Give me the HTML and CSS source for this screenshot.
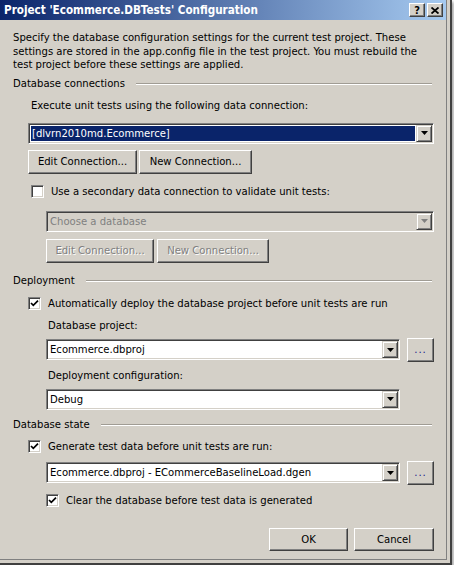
FILE: index.html
```html
<!DOCTYPE html>
<html>
<head>
    <link rel="stylesheet" href="styles.css">
</head>
<body>
    <div class="window">
        <div class="title_bar">
            <span class="title_text">Project 'Ecommerce.DBTests' Configuration</span>
            <div class="cap_btns">
                <span class="cap_btn">?</span>
                <span class="cap_btn"><svg width="8" height="7" viewBox="0 0 8 7"><path d="M0.5 0.5 L7.5 6.5 M7.5 0.5 L0.5 6.5" stroke="#000" stroke-width="1.8"/></svg></span>
            </div>
        </div>

        <div class="content">
            <p class="intro">Specify the database configuration settings for the current test project. These<br>settings are stored in the app.config file in the test project. You must rebuild the<br>test project before these settings are applied.</p>

            <div class="group_title"><span>Database connections</span><div class="etched"></div></div>
            <div class="label conn_label">Execute unit tests using the following data connection:</div>
            <div class="combo main_combo">
                <span class="combo_text selected">[dlvrn2010md.Ecommerce]</span>
                <span class="combo_arrow"><svg width="7" height="4" viewBox="0 0 7 4"><polygon points="0,0 7,0 3.5,4" fill="#000"/></svg></span>
            </div>
            <div class="btn_row first_btns">
                <button class="btn" style="width:109px">Edit Connection...</button>
                <button class="btn" style="width:113px">New Connection...</button>
            </div>
            <div class="check_row secondary_check">
                <span class="checkbox"></span>
                <span>Use a secondary data connection to validate unit tests:</span>
            </div>
            <div class="combo disabled sub_combo">
                <span class="combo_text">Choose a database</span>
                <span class="combo_arrow"><svg width="7" height="4" viewBox="0 0 7 4"><polygon points="0,0 7,0 3.5,4" fill="#808080"/></svg></span>
            </div>
            <div class="btn_row second_btns">
                <button class="btn" disabled style="width:108px">Edit Connection...</button>
                <button class="btn" disabled style="width:112px">New Connection...</button>
            </div>

            <div class="group_title deploy_title"><span>Deployment</span><div class="etched"></div></div>
            <div class="check_row deploy_check">
                <span class="checkbox"><svg width="9" height="9" viewBox="0 0 9 9"><path d="M1 4 L3.3 6.4 L8 1.6" fill="none" stroke="#000" stroke-width="1.7"/></svg></span>
                <span>Automatically deploy the database project before unit tests are run</span>
            </div>
            <div class="label sub_label proj_label">Database project:</div>
            <div class="combo_row proj_row">
                <div class="combo short_combo">
                    <span class="combo_text">Ecommerce.dbproj</span>
                    <span class="combo_arrow"><svg width="7" height="4" viewBox="0 0 7 4"><polygon points="0,0 7,0 3.5,4" fill="#000"/></svg></span>
                </div>
                <button class="btn browse_btn">...</button>
            </div>
            <div class="label sub_label config_label">Deployment configuration:</div>
            <div class="combo short_combo config_combo">
                <span class="combo_text">Debug</span>
                <span class="combo_arrow"><svg width="7" height="4" viewBox="0 0 7 4"><polygon points="0,0 7,0 3.5,4" fill="#000"/></svg></span>
            </div>

            <div class="group_title state_title"><span>Database state</span><div class="etched"></div></div>
            <div class="check_row state_check">
                <span class="checkbox"><svg width="9" height="9" viewBox="0 0 9 9"><path d="M1 4 L3.3 6.4 L8 1.6" fill="none" stroke="#000" stroke-width="1.7"/></svg></span>
                <span>Generate test data before unit tests are run:</span>
            </div>
            <div class="combo_row gen_row">
                <div class="combo short_combo">
                    <span class="combo_text">Ecommerce.dbproj - ECommerceBaselineLoad.dgen</span>
                    <span class="combo_arrow"><svg width="7" height="4" viewBox="0 0 7 4"><polygon points="0,0 7,0 3.5,4" fill="#000"/></svg></span>
                </div>
                <button class="btn browse_btn">...</button>
            </div>
            <div class="check_row clear_check">
                <span class="checkbox"><svg width="9" height="9" viewBox="0 0 9 9"><path d="M1 4 L3.3 6.4 L8 1.6" fill="none" stroke="#000" stroke-width="1.7"/></svg></span>
                <span>Clear the database before test data is generated</span>
            </div>

            <div class="dialog_btns">
                <button class="btn" style="width:79px">OK</button>
                <button class="btn" style="width:80px">Cancel</button>
            </div>
        </div>
    </div>
</body>
</html>
```

FILE: styles.css
```css
* { box-sizing: border-box; }
body { margin: 0; background: #fff; font-family: "DejaVu Sans Condensed", "DejaVu Sans", sans-serif; font-size: 11.2px; color: #000; }

/* window frame */
.window { width: 452px; height: 565px; background: #d4d0c8; border-right: 2px solid #404040; border-bottom: 2px solid #404040;
    box-shadow: inset -3px -3px 0 #d4d0c8, inset -4px -4px 0 #808080, 2px 2px 3px rgba(0,0,0,0.35); display: flex; flex-direction: column; }
.title_bar { height: 20px; margin-right: 4px; background: linear-gradient(to right, #0a246a, #a6caf0); display: flex; align-items: center; justify-content: space-between; padding: 0 3px 0 4px; }
.title_text { color: #fff; font-weight: bold; font-size: 11.6px; }
.cap_btns { display: flex; gap: 2px; }
.cap_btn { width: 16px; height: 14px; background: #d4d0c8; border: 1px solid; border-color: #fff #404040 #404040 #fff; box-shadow: inset -1px -1px 0 #808080;
    display: flex; align-items: center; justify-content: center; font-weight: bold; font-size: 11px; line-height: 1; }

.content { padding: 11px 16px 0 13px; display: flex; flex-direction: column; }
.intro { margin: 0; line-height: 13.5px; }
.label { line-height: 14px; }

/* group headings */
.group_title { display: flex; align-items: center; line-height: 14px; margin-top: 5px; }
.group_title .etched { flex: 1; height: 2px; margin-left: 11px; margin-right: 2px; border-top: 1px solid #a09c94; border-bottom: 1px solid #fff; }
.deploy_title { margin-top: 11px; }
.state_title { margin-top: 8px; }

/* buttons */
.btn { font: inherit; height: 24px; padding: 0; background: #d4d0c8; color: #000; border: 1px solid; border-color: #fff #404040 #404040 #fff;
    box-shadow: inset -1px -1px 0 #808080; }
.btn:disabled { color: #808080; text-shadow: 1px 1px 0 #fff; }
.btn_row { display: flex; gap: 2px; }
.first_btns { margin-left: 15px; margin-top: 6px; }
.second_btns { margin-left: 33px; margin-top: 7px; gap: 3px; }
.browse_btn { width: 27px; height: 24px; color: #1a1a8a; letter-spacing: 1px; }
.dialog_btns { display: flex; justify-content: flex-end; gap: 6px; margin-top: 20px; }
.dialog_btns .btn { height: 23px; }

/* combo boxes */
.combo { height: 21px; display: flex; align-items: stretch; background: #fff; border: 1px solid; border-color: #808080 #fff #fff #808080;
    box-shadow: inset 1px 1px 0 #404040, inset -1px -1px 0 #d4d0c8; padding: 2px; }
.combo_text { flex: 1; padding-left: 1px; line-height: 15px; white-space: nowrap; overflow: hidden; }
.combo_text.selected { background: #0a246a; color: #fff; margin-right: 1px; }
.combo_arrow { width: 16px; background: #d4d0c8; border: 1px solid; border-color: #d4d0c8 #404040 #404040 #d4d0c8;
    box-shadow: inset 1px 1px 0 #fff, inset -1px -1px 0 #808080; display: flex; align-items: center; justify-content: center; margin: -1px -1px -1px 0; }
.combo.disabled { background: #d4d0c8; color: #808080; }
.main_combo { margin-left: 15px; margin-top: 10px; }
.sub_combo { margin-left: 33px; margin-top: 12px; }
.short_combo { width: 354px; }
.combo_row { display: flex; align-items: center; gap: 7px; margin-left: 33px; }
.proj_row { margin-top: 5px; }
.gen_row { margin-top: 7px; }
.config_combo { margin-left: 33px; margin-top: 6px; }

/* labels */
.conn_label { margin-left: 18px; margin-top: 8px; }
.sub_label { margin-left: 35px; }
.proj_label { margin-top: 8px; }
.config_label { margin-top: 7px; }

/* check boxes */
.check_row { display: flex; align-items: center; gap: 7px; line-height: 14px; }
.checkbox { width: 13px; height: 13px; background: #fff; border: 1px solid; border-color: #808080 #fff #fff #808080; box-shadow: inset 1px 1px 0 #404040, inset -1px -1px 0 #d4d0c8;
    display: flex; align-items: center; justify-content: center; }
.secondary_check { margin-left: 18px; margin-top: 11px; }
.deploy_check { margin-left: 15px; margin-top: 9px; }
.state_check { margin-left: 15px; margin-top: 8px; }
.clear_check { margin-left: 33px; margin-top: 9px; }
```
